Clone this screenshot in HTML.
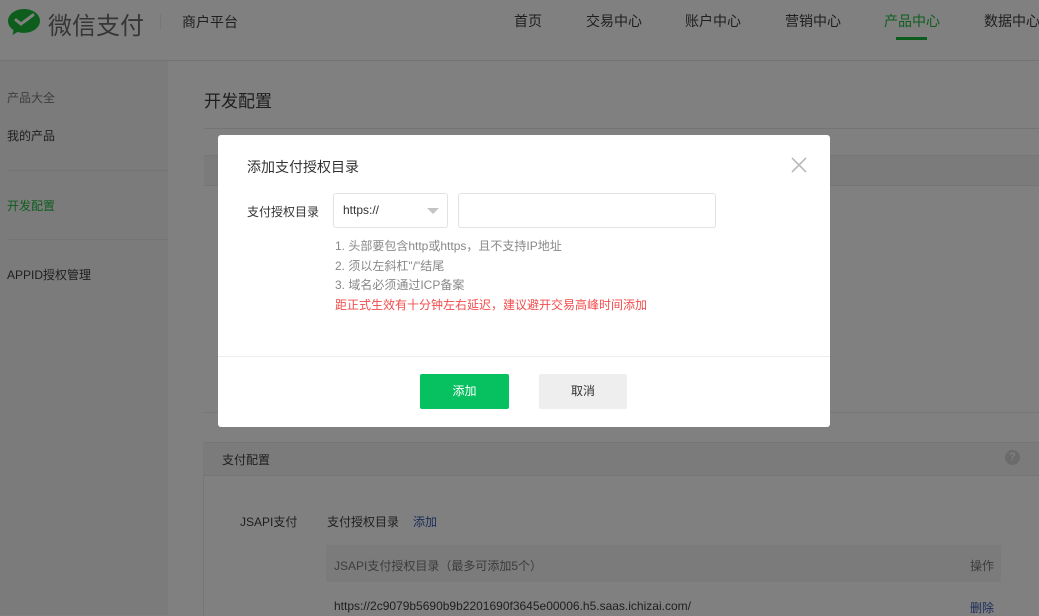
<!DOCTYPE html>
<html><head><meta charset="utf-8"><style>
*{margin:0;padding:0;box-sizing:border-box}
body{width:1039px;height:615px;overflow:hidden;background:#808080;font-family:"Liberation Sans","Noto Sans CJK SC",sans-serif;position:relative;color:#1a1a1a}
.a{position:absolute;white-space:nowrap}
.hl{position:absolute;height:1px;background:#747474}
</style></head><body>
<div class="hl" style="left:0;top:60px;width:1039px"></div>
<div class="a" style="left:0;top:61px;width:168px;height:554px;background:#7b7b7b"></div>
<!-- logo -->
<svg class="a" style="left:7px;top:7px" width="34" height="30" viewBox="0 0 34 30"><path d="M17 2C8 2 1 7.5 1 14c0 4 2.5 7 5.5 9l-1 5 5-3c2 .6 4 .9 6.5.9 9 0 16-5.5 16-12S26 2 17 2z" fill="#0d5e1d"/><path d="M9 13l5 4 12-9" stroke="#808080" stroke-width="3" fill="none" stroke-linecap="round"/></svg>
<div class="a" style="left:48px;top:6px;font-size:24px;color:#363636">微信支付</div>
<div class="a" style="left:160px;top:14px;width:1px;height:16px;background:#777"></div>
<div class="a" style="left:182px;top:12px;font-size:14px;color:#1e1e1e">商户平台</div>
<div class="a" style="left:514px;top:11px;font-size:14px;color:#1e1e1e">首页</div>
<div class="a" style="left:586px;top:11px;font-size:14px;color:#1e1e1e">交易中心</div>
<div class="a" style="left:685px;top:11px;font-size:14px;color:#1e1e1e">账户中心</div>
<div class="a" style="left:785px;top:11px;font-size:14px;color:#1e1e1e">营销中心</div>
<div class="a" style="left:884px;top:11px;font-size:14px;color:#0e5e1e">产品中心</div>
<div class="a" style="left:896px;top:37px;width:31px;height:3px;background:#0a5d1d"></div>
<div class="a" style="left:984px;top:11px;font-size:14px;color:#1e1e1e">数据中心</div>
<!-- sidebar -->
<div class="a" style="left:7px;top:89px;font-size:12px;color:#3e3e3e">产品大全</div>
<div class="a" style="left:7px;top:127px;font-size:12px;color:#1e1e1e">我的产品</div>
<div class="hl" style="left:7px;top:170px;width:161px"></div>
<div class="a" style="left:7px;top:197px;font-size:12px;color:#0e5e1e">开发配置</div>
<div class="hl" style="left:7px;top:239px;width:161px"></div>
<div class="a" style="left:7px;top:266px;font-size:12px;color:#1e1e1e">APPID授权管理</div>
<!-- main -->
<div class="a" style="left:204px;top:87px;font-size:17px;color:#1e1e1e">开发配置</div>
<div class="hl" style="left:204px;top:128px;width:835px"></div>
<div class="a" style="left:204px;top:155px;width:835px;height:31px;background:#7b7b7b;border-top:1px solid #767676;border-bottom:1px solid #767676"></div>
<div class="a" style="left:203px;top:412px;width:836px;height:1px;background:#767676"></div>
<div class="a" style="left:203px;top:442px;width:836px;height:34px;background:#7b7b7b;border-top:1px solid #767676;border-bottom:1px solid #767676"></div>
<div class="a" style="left:222px;top:451px;font-size:12px;color:#1e1e1e">支付配置</div>
<div class="a" style="left:1005px;top:450px;width:15px;height:15px;border-radius:50%;background:#6b6b6b;color:#808080;font-size:11px;text-align:center;line-height:15px;font-weight:bold">?</div>
<div class="a" style="left:203px;top:476px;width:1px;height:139px;background:#767676"></div>
<div class="a" style="left:240px;top:513px;font-size:12px;color:#1e1e1e">JSAPI支付</div>
<div class="a" style="left:327px;top:513px;font-size:12px;color:#1e1e1e">支付授权目录</div>
<div class="a" style="left:413px;top:513px;font-size:12px;color:#1b2c57">添加</div>
<div class="a" style="left:326px;top:545px;width:675px;height:37px;background:#7b7b7b"></div>
<div class="a" style="left:334px;top:557px;font-size:12px;color:#3c3c3c">JSAPI支付授权目录（最多可添加5个）</div>
<div class="a" style="left:970px;top:557px;font-size:12px;color:#3c3c3c">操作</div>
<div class="a" style="left:334px;top:599px;font-size:12px;color:#1e1e1e">https://2c9079b5690b9b2201690f3645e00006.h5.saas.ichizai.com/</div>
<div class="a" style="left:970px;top:599px;font-size:12px;color:#1b2c57">删除</div>
<!-- modal -->
<div class="a" style="left:218px;top:135px;width:612px;height:292px;background:#fff;border-radius:3px">
<div class="a" style="left:29px;top:22px;font-size:14px;color:#333">添加支付授权目录</div>
<svg class="a" style="left:573px;top:22px" width="16" height="16" viewBox="0 0 16 16"><path d="M1 1L15 15M15 1L1 15" stroke="#bbb" stroke-width="1.6"/></svg>
<div class="a" style="left:29px;top:68px;font-size:12px;color:#333">支付授权目录</div>
<div class="a" style="left:115px;top:58px;width:115px;height:35px;border:1px solid #e2e2e2;border-radius:3px"></div>
<div class="a" style="left:125px;top:68px;font-size:12px;color:#333">https://</div>
<div class="a" style="left:209px;top:73px;width:0;height:0;border-left:6px solid transparent;border-right:6px solid transparent;border-top:6px solid #c4c4c4"></div>
<div class="a" style="left:240px;top:58px;width:258px;height:35px;border:1px solid #e2e2e2;border-radius:3px"></div>
<div class="a" style="left:117px;top:102px;font-size:12px;color:#888;line-height:19.5px">1. 头部要包含http或https，且不支持IP地址<br>2. 须以左斜杠"/"结尾<br>3. 域名必须通过ICP备案<br><span style="color:#f24c4c">距正式生效有十分钟左右延迟，建议避开交易高峰时间添加</span></div>
<div class="a" style="left:0;top:221px;width:612px;height:1px;background:#eee"></div>
<div class="a" style="left:202px;top:239px;width:89px;height:35px;background:#07c160;border-radius:2px;color:#fff;font-size:12px;text-align:center;line-height:35px">添加</div>
<div class="a" style="left:321px;top:239px;width:88px;height:35px;background:#eee;border-radius:2px;color:#333;font-size:12px;text-align:center;line-height:35px">取消</div>
</div>
</body></html>
